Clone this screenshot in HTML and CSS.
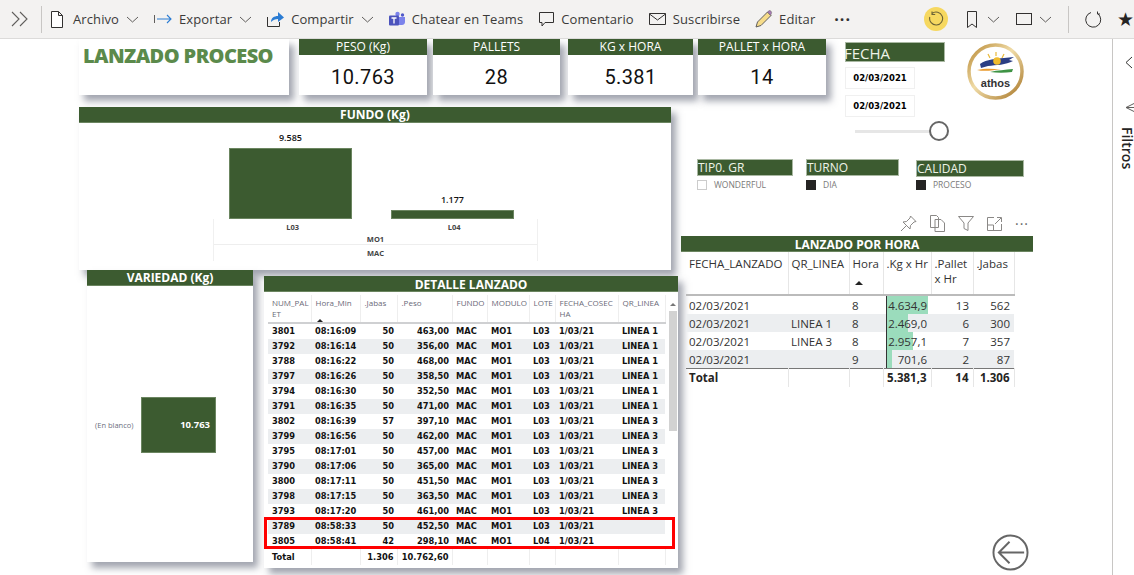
FILE: index.html
```html
<!DOCTYPE html>
<html lang="es">
<head>
  <meta charset="UTF-8">
  <title>Lanzado Proceso</title>
  <link rel="stylesheet" href="styles.css">
</head>
<body>
  <header class="toolbar">
    <svg class="expand" width="18" height="18" viewBox="0 0 18 18"><path d="M1 2l7 7-7 7M9 2l7 7-7 7" fill="none" stroke="#605e5c" stroke-width="1.1"/></svg>
    <span class="sep"></span>

    <div class="tool first">
      <svg width="12" height="17" viewBox="0 0 12 17"><path d="M.5.5h7l4 4v12H.5zM7.5.5v4h4" fill="#fff" stroke="#323130"/></svg>
      <span class="tool-text gap-file">Archivo</span>
      <svg class="chev" width="13" height="7" viewBox="0 0 13 7"><path d="M1 1l5.500 5L12 1" fill="none" stroke="#605e5c"/></svg>
    </div>
    <div class="tool">
      <svg width="18" height="10" viewBox="0 0 18 10"><path d="M.5 1v8" stroke="#605e5c" fill="none"/><path d="M3 5h14M13 1l4 4-4 4" stroke="#2b7cd3" fill="none" stroke-width="1.1"/></svg>
      <span class="tool-text">Exportar</span>
      <svg class="chev" width="13" height="7" viewBox="0 0 13 7"><path d="M1 1l5.500 5L12 1" fill="none" stroke="#605e5c"/></svg>
    </div>
    <div class="tool">
      <svg width="17" height="16" viewBox="0 0 17 16"><path d="M.5 6v9.500h12V11" fill="none" stroke="#323130"/><path d="M4 11c0-4 3-6 7-6V1l6 5.500L11 11V8c-3 0-5 1-7 3z" fill="#2b7cd3"/></svg>
      <span class="tool-text">Compartir</span>
      <svg class="chev" width="13" height="7" viewBox="0 0 13 7"><path d="M1 1l5.500 5L12 1" fill="none" stroke="#605e5c"/></svg>
    </div>
    <div class="tool">
      <svg width="16" height="16" viewBox="0 0 16 16"><circle cx="8.500" cy="3" r="2.200" fill="#7b83eb"/><circle cx="13.500" cy="4" r="1.700" fill="#5059c9"/><path d="M10 6h6v5c0 2-1.500 3-3 3h-3z" fill="#7b83eb"/><rect x="0" y="4.500" width="10" height="10" rx="1" fill="#4b53bc"/><path d="M2.500 7h5M5 7v5.500" stroke="#fff" stroke-width="1.300"/></svg>
      <span class="tool-text">Chatear en Teams</span>
    </div>
    <div class="tool gap-comment">
      <svg width="15" height="15" viewBox="0 0 15 15"><path d="M.5.5h14v10H6l-3 3.500v-3.500H.5z" fill="none" stroke="#323130"/></svg>
      <span class="tool-text">Comentario</span>
    </div>
    <div class="tool">
      <svg width="17" height="12" viewBox="0 0 17 12"><path d="M.5.5h16v11H.5zM.5 1l8 6 8-6" fill="none" stroke="#323130"/></svg>
      <span class="tool-text">Suscribirse</span>
    </div>
    <div class="tool">
      <svg width="18" height="18" viewBox="0 0 18 18"><path d="M1 17l1.500-5L12.500 2l3.500 3.500L6 15.500z" fill="#f6dc8a" stroke="#605e5c"/><path d="M12.500 2l1-1c.8-.6 1.800-.5 2.500.2s.8 1.800.3 2.500l-.8 1.800z" fill="#a77bb5" stroke="#605e5c" stroke-width=".5"/></svg>
      <span class="tool-text gap-edit">Editar</span>
    </div>
    <span class="more">···</span>

    <div class="tool-right">
      <span class="undo">
        <svg width="16" height="16" viewBox="0 0 16 16"><path d="M4 2.500A6.500 6.500 0 1 1 1.800 6M4 .5v3h3.200" fill="none" stroke="#6b6236" stroke-width="1.100"/></svg>
      </span>
      <svg class="mark" width="10" height="17" viewBox="0 0 10 17"><path d="M.5.5h9v16L5 13 .5 16.500z" fill="none" stroke="#323130"/></svg>
      <svg class="chev" width="13" height="7" viewBox="0 0 13 7"><path d="M1 1l5.500 5L12 1" fill="none" stroke="#605e5c"/></svg>
      <svg class="view" width="16" height="12" viewBox="0 0 16 12"><rect x=".5" y=".5" width="15" height="11" fill="none" stroke="#323130"/></svg>
      <svg class="chev" width="13" height="7" viewBox="0 0 13 7"><path d="M1 1l5.500 5L12 1" fill="none" stroke="#605e5c"/></svg>
      <span class="sep sep-right"></span>
      <svg class="reload" width="17" height="17" viewBox="0 0 17 17"><path d="M6 1.500A7.500 7.500 0 1 0 12.500 2.500M12.500 .5v2.500H15" fill="none" stroke="#323130"/></svg>
      <span class="star">★</span>
    </div>
  </header>

  <div class="page">
    <main class="report">
      <section class="top-row">
        <div class="card-title">LANZADO PROCESO</div>
        <div class="kpi kpi-peso"><h3>PESO (Kg)</h3><p>10.763</p></div>
        <div class="kpi kpi-pallets"><h3>PALLETS</h3><p>28</p></div>
        <div class="kpi kpi-kg"><h3>KG x HORA</h3><p>5.381</p></div>
        <div class="kpi kpi-hora"><h3>PALLET x HORA</h3><p>14</p></div>
      </section>

      <section class="side-top">
        <div class="fecha">
          <h3>FECHA</h3>
          <div class="date-box">02/03/2021</div>
          <div class="date-box">02/03/2021</div>
          <div class="slider"><span class="track"></span><span class="thumb"></span></div>
        </div>
        <svg class="logo" width="57" height="57" viewBox="0 0 57 57">
          <defs>
            <linearGradient id="ring" x1="0" y1="0" x2="1" y2="1">
              <stop offset="0" stop-color="#b98a35"/>
              <stop offset=".45" stop-color="#f0dca8"/>
              <stop offset="1" stop-color="#a9782a"/>
            </linearGradient>
          </defs>
          <circle cx="28.500" cy="28.500" r="26.500" fill="#fff" stroke="url(#ring)" stroke-width="3.500"/>
          <path d="M29 9v4M21 11l2 4M37 11l-2 4" stroke="#e9b93a" stroke-width="1.200"/>
          <path d="M13 21c7-5 16-5 24-6l10-1-5 3 4 1c-7 4-17 4-25 5l-7 2z" fill="#2b3e84"/>
          <circle cx="30" cy="18" r="3.800" fill="#f0bb2c"/>
          <path d="M10 27c8-2 16-1 24-1-7 1-16 3-24 1z" fill="#e99a2e"/>
          <path d="M23 29c8-2 15-2 23-3l-1 3c-7 1-15 1-22 0z" fill="#3e9344"/>
          <text x="28.500" y="44" text-anchor="middle" class="logo-text">athos</text>
        </svg>
      </section>

      <section class="left-col">
        <div class="visual fundo">
          <h2 class="band">FUNDO (Kg)</h2>
          <div class="plot">
            <div class="bar-col"><span>9.585</span><div class="bar bar-l03"></div></div>
            <div class="bar-col"><span>1.177</span><div class="bar bar-l04"></div></div>
          </div>
          <div class="axis">
            <div class="axis-row"><span>L03</span><span>L04</span></div>
            <div class="axis-line">MO1</div>
            <div class="axis-line last">MAC</div>
          </div>
        </div>

        <div class="bottom-row">
          <div class="visual variedad">
            <h2 class="band">VARIEDAD (Kg)</h2>
            <div class="var-chart">
              <span class="var-label">(En blanco)</span>
              <div class="var-bar">10.763</div>
            </div>
          </div>

          <div class="visual detalle">
            <h2 class="band">DETALLE LANZADO</h2>
            <div class="detalle-body">
              <table class="grid">
                <colgroup>
                  <col class="c1"><col class="c2"><col class="c3"><col class="c4"><col class="c5">
                  <col class="c6"><col class="c7"><col class="c8"><col class="c9">
                </colgroup>
                <thead>
                  <tr>
                    <th>NUM_PALET</th><th>Hora_Min<span class="sort"></span></th><th>.Jabas</th><th>.Peso</th><th>FUNDO</th>
                    <th>MODULO</th><th>LOTE</th><th>FECHA_COSECHA</th><th>QR_LINEA</th>
                  </tr>
                </thead>
                <tbody>
                  <tr><td>3801</td><td>08:16:09</td><td class="num">50</td><td class="num">463,00</td><td>MAC</td><td>MO1</td><td>L03</td><td>1/03/21</td><td>LINEA 1</td></tr>
                  <tr><td>3792</td><td>08:16:14</td><td class="num">50</td><td class="num">356,00</td><td>MAC</td><td>MO1</td><td>L03</td><td>1/03/21</td><td>LINEA 1</td></tr>
                  <tr><td>3788</td><td>08:16:22</td><td class="num">50</td><td class="num">468,00</td><td>MAC</td><td>MO1</td><td>L03</td><td>1/03/21</td><td>LINEA 1</td></tr>
                  <tr><td>3797</td><td>08:16:26</td><td class="num">50</td><td class="num">358,50</td><td>MAC</td><td>MO1</td><td>L03</td><td>1/03/21</td><td>LINEA 1</td></tr>
                  <tr><td>3794</td><td>08:16:30</td><td class="num">50</td><td class="num">352,50</td><td>MAC</td><td>MO1</td><td>L03</td><td>1/03/21</td><td>LINEA 1</td></tr>
                  <tr><td>3791</td><td>08:16:35</td><td class="num">50</td><td class="num">471,00</td><td>MAC</td><td>MO1</td><td>L03</td><td>1/03/21</td><td>LINEA 1</td></tr>
                  <tr><td>3802</td><td>08:16:39</td><td class="num">57</td><td class="num">397,10</td><td>MAC</td><td>MO1</td><td>L03</td><td>1/03/21</td><td>LINEA 3</td></tr>
                  <tr><td>3799</td><td>08:16:56</td><td class="num">50</td><td class="num">462,00</td><td>MAC</td><td>MO1</td><td>L03</td><td>1/03/21</td><td>LINEA 3</td></tr>
                  <tr><td>3795</td><td>08:17:01</td><td class="num">50</td><td class="num">457,00</td><td>MAC</td><td>MO1</td><td>L03</td><td>1/03/21</td><td>LINEA 3</td></tr>
                  <tr><td>3790</td><td>08:17:06</td><td class="num">50</td><td class="num">365,00</td><td>MAC</td><td>MO1</td><td>L03</td><td>1/03/21</td><td>LINEA 3</td></tr>
                  <tr><td>3800</td><td>08:17:11</td><td class="num">50</td><td class="num">451,50</td><td>MAC</td><td>MO1</td><td>L03</td><td>1/03/21</td><td>LINEA 3</td></tr>
                  <tr><td>3798</td><td>08:17:15</td><td class="num">50</td><td class="num">363,50</td><td>MAC</td><td>MO1</td><td>L03</td><td>1/03/21</td><td>LINEA 3</td></tr>
                  <tr><td>3793</td><td>08:17:20</td><td class="num">50</td><td class="num">461,00</td><td>MAC</td><td>MO1</td><td>L03</td><td>1/03/21</td><td>LINEA 3</td></tr>
                  <tr><td>3789</td><td>08:58:33</td><td class="num">50</td><td class="num">452,50</td><td>MAC</td><td>MO1</td><td>L03</td><td>1/03/21</td><td></td></tr>
                  <tr><td>3805</td><td>08:58:41</td><td class="num">42</td><td class="num">298,10</td><td>MAC</td><td>MO1</td><td>L04</td><td>1/03/21</td><td></td></tr>
                </tbody>
                <tfoot>
                  <tr><td>Total</td><td></td><td class="num">1.306</td><td class="num">10.762,60</td><td></td><td></td><td></td><td></td><td></td></tr>
                </tfoot>
              </table>
              <div class="scroll">
                <span class="caret"></span>
                <span class="scroll-thumb"></span>
              </div>
              <span class="red-box"></span>
            </div>
          </div>
        </div>
      </section>

      <section class="right-col">
        <div class="slicers">
          <div class="slicer tipo">
            <h4>TIP0. GR</h4>
            <div class="check"><span class="box"></span>WONDERFUL</div>
          </div>
          <div class="slicer turno">
            <h4>TURNO</h4>
            <div class="check"><span class="box on"></span>DIA</div>
          </div>
          <div class="slicer calidad">
            <h4>CALIDAD</h4>
            <div class="check"><span class="box on"></span>PROCESO</div>
          </div>
        </div>

        <div class="visual-tools">
          <svg width="17" height="17" viewBox="0 0 17 17"><path d="M10.500 1l5.500 5.500-2 .5-3.500 3.500-.5 3.500-7-7 3.500-.5L10 3zM6 11l-5 5" fill="none" stroke="#8a8886"/></svg>
          <svg width="15" height="17" viewBox="0 0 15 17"><path d="M.5.5h6l2 2v10h-8zM5 4.500h6l3.500 3.500v8.500H5z" fill="#fff" stroke="#8a8886"/></svg>
          <svg width="16" height="15" viewBox="0 0 16 15"><path d="M.5.5h15L10 7v7.500l-4-2V7z" fill="none" stroke="#8a8886"/></svg>
          <svg width="15" height="14" viewBox="0 0 15 14"><path d="M7 .5H.5v13h14V7M.5 8h6v5.500M8 7l6-6M10 .5h4.500V5" fill="none" stroke="#8a8886"/></svg>
          <span class="more more-small">···</span>
        </div>

        <div class="hora">
          <h2 class="band">LANZADO POR HORA</h2>
          <table class="hora-table">
            <colgroup>
              <col class="h1"><col class="h2"><col class="h3"><col class="h4"><col class="h5"><col class="h6">
            </colgroup>
            <thead>
              <tr>
                <th>FECHA_LANZADO</th><th>QR_LINEA</th><th>Hora<span class="sort"></span></th><th>.Kg x Hr</th><th>.Pallet x Hr</th><th>.Jabas</th>
              </tr>
            </thead>
            <tbody>
              <tr><td>02/03/2021</td><td></td><td>8</td><td class="num data-bar"><span class="fill fill-a"></span><span class="val">4.634,9</span></td><td class="num">13</td><td class="num">562</td></tr>
              <tr><td>02/03/2021</td><td>LINEA 1</td><td>8</td><td class="num data-bar"><span class="fill fill-b"></span><span class="val">2.469,0</span></td><td class="num">6</td><td class="num">300</td></tr>
              <tr><td>02/03/2021</td><td>LINEA 3</td><td>8</td><td class="num data-bar"><span class="fill fill-c"></span><span class="val">2.957,1</span></td><td class="num">7</td><td class="num">357</td></tr>
              <tr><td>02/03/2021</td><td></td><td>9</td><td class="num data-bar"><span class="fill fill-d"></span><span class="val">701,6</span></td><td class="num">2</td><td class="num">87</td></tr>
            </tbody>
            <tfoot>
              <tr><td>Total</td><td></td><td></td><td class="num">5.381,3</td><td class="num">14</td><td class="num">1.306</td></tr>
            </tfoot>
          </table>
        </div>

        <svg class="back" width="37" height="37" viewBox="0 0 38 38"><circle cx="19" cy="19" r="17.500" fill="none" stroke="#666" stroke-width="2"/><path d="M33 19H8M18 8L7 19l11 11" fill="none" stroke="#666" stroke-width="2"/></svg>
      </section>
    </main>

    <aside class="filters">
      <svg class="f-chev" width="8" height="13" viewBox="0 0 8 13"><path d="M7 1L1 6.500 7 12" fill="none" stroke="#323130"/></svg>
      <svg class="f-icon" width="9" height="11" viewBox="0 0 9 11"><path d="M10 1L1 5.500l9 4.500M10 5.500H1" fill="none" stroke="#605e5c"/></svg>
      <span class="f-text">Filtros</span>
    </aside>
  </div>
</body>
</html>
```

FILE: styles.css
```css
:root {
  --green: #3c5b30;
  --green-edge: #6b8560;
  --stripe: #eceef0;
  --shadow: 5px 6px 7px rgba(70, 75, 95, 0.5);
}

* {
  box-sizing: border-box;
}

html, body {
  height: 100%;
}

body {
  margin: 0;
  background: #fff;
  color: #252423;
  font-family: "Open Sans", "Liberation Sans", sans-serif;
  overflow: hidden;
}

h2, h3, h4, p {
  margin: 0;
}

/* top bar */
.toolbar {
  height: 39px;
  background: #f3f2f1;
  border-bottom: 1px solid #dcdbda;
  display: flex;
  align-items: center;
  padding-left: 11px;
  overflow: hidden;
}

.sep {
  width: 1px;
  height: 27px;
  background: #c8c6c4;
  margin: 0 9px 0 12px;
}

.tool {
  display: flex;
  align-items: center;
  gap: 7px;
  margin-left: 15px;
  flex: none;
}

.tool.first {
  margin-left: 0;
}

.tool.gap-comment {
  margin-left: 16px;
}

.tool-text {
  font-size: 13px;
  color: #3b3a39;
  letter-spacing: 0.1px;
}

.gap-file {
  margin-left: 3px;
}

.gap-edit {
  margin-left: -1px;
}

.chev {
  flex: none;
}

.more {
  margin-left: 19px;
  font-size: 16px;
  font-weight: 700;
  letter-spacing: 1px;
  color: #323130;
}

.tool-right {
  margin-left: auto;
  display: flex;
  align-items: center;
  flex: none;
}

.undo {
  width: 24px;
  height: 24px;
  border-radius: 50%;
  background: #f6d860;
  display: flex;
  align-items: center;
  justify-content: center;
}

.mark {
  margin-left: 19px;
}

.mark + .chev {
  margin-left: 10px;
}

.view {
  margin-left: 16px;
}

.view + .chev {
  margin-left: 7px;
}

.sep-right {
  margin: 0 16px;
}

.star {
  margin-left: 15px;
  font-size: 19px;
  line-height: 1;
  width: 17px;
  color: #252423;
  font-family: "DejaVu Sans", sans-serif;
}

/* report canvas */
.page {
  display: flex;
  height: 536px;
}

.report {
  width: 1112px;
  height: 536px;
  overflow: hidden;
  display: grid;
  grid-template-columns: 79px 602px 164px 267px;
  grid-template-rows: 68px 52px 416px;
}

.top-row {
  grid-column: 2 / 4;
  grid-row: 1;
  display: flex;
  align-items: flex-start;
}

.card-title {
  width: 210px;
  height: 56px;
  background: #fff;
  box-shadow: var(--shadow);
  color: #5b8a4b;
  font-size: 20px;
  font-weight: 800;
  letter-spacing: -0.6px;
  line-height: 34px;
  padding-left: 4px;
}

.kpi {
  height: 56px;
  background: #fff;
  box-shadow: var(--shadow);
  text-align: center;
}

.kpi h3 {
  height: 16px;
  background: var(--green);
  color: #fff;
  font-size: 12px;
  font-weight: 400;
  line-height: 16px;
}

.kpi p {
  font-family: Roboto, sans-serif;
  font-size: 20px;
  letter-spacing: 0.4px;
  line-height: 44px;
  color: #111;
}

.kpi-peso { width: 128px; margin-left: 10px; }
.kpi-pallets { width: 127px; margin-left: 6px; }
.kpi-kg { width: 125px; margin-left: 8px; }
.kpi-hora { width: 128px; margin-left: 5px; }

.side-top {
  grid-column: 4;
  grid-row: 1 / 3;
  display: flex;
  align-items: flex-start;
}

.fecha {
  width: 100px;
  flex: none;
  margin-top: 3px;
}

.fecha h3 {
  height: 20px;
  background: var(--green);
  border: 1px solid #a9b8a2;
  color: #eef3e8;
  font-size: 15px;
  font-weight: 400;
  line-height: 20px;
  text-indent: -2px;
}

.date-box {
  width: 70px;
  height: 22px;
  margin-top: 5px;
  border: 1px solid #f0f0f0;
  font-family: "DejaVu Sans", sans-serif;
  font-size: 8.500px;
  font-weight: 700;
  line-height: 21px;
  text-align: center;
  color: #000;
}

.date-box + .date-box {
  margin-top: 6px;
}

.slider {
  display: flex;
  align-items: center;
  width: 95px;
  margin: 4px 0 0 10px;
}

.track {
  width: 75px;
  height: 3px;
  flex: none;
  background: #e6e6e6;
}

.thumb {
  width: 20px;
  height: 20px;
  flex: none;
  margin-left: -1px;
  border: 2px solid #666;
  border-radius: 50%;
  background: #fff;
}

.logo {
  margin: 4px 0 0 22px;
  flex: none;
}

.logo-text {
  font-family: "Liberation Sans", sans-serif;
  font-size: 11px;
  font-weight: 700;
  fill: #333;
}

.left-col {
  grid-column: 2;
  grid-row: 2 / 4;
}

.visual {
  background: #fff;
  box-shadow: var(--shadow);
}

.band {
  height: 16px;
  background: var(--green);
  border-bottom: 1px solid var(--green-edge);
  color: #fff;
  font-size: 12px;
  font-weight: 700;
  line-height: 16px;
  text-align: center;
}

.detalle .band,
.hora .band {
  line-height: 17px;
}

.fundo {
  width: 592px;
  height: 163px;
}

.plot {
  display: flex;
  align-items: flex-end;
  gap: 39px;
  height: 96px;
  padding-left: 150px;
}

.bar-col {
  width: 123px;
  text-align: center;
  font-size: 9px;
  font-weight: 600;
  color: #111;
}

.bar-col span {
  display: block;
  line-height: 12px;
  margin-bottom: 4px;
}

.bar {
  background: var(--green);
  border: 1px solid var(--green-edge);
}

.bar-l03 { height: 71px; }
.bar-l04 { height: 9px; }

.axis {
  width: 325px;
  margin-left: 134px;
  border-left: 1px solid #f0f0f0;
  border-right: 1px solid #f0f0f0;
  font-size: 7.500px;
  font-weight: 700;
  text-align: center;
  color: #444;
}

.axis-row {
  display: flex;
  height: 14px;
  line-height: 16px;
}

.axis-row span {
  width: 50%;
  padding-right: 4px;
}

.axis-line {
  height: 12px;
  line-height: 12px;
  border-bottom: 1px solid #eee;
}

.axis-line.last {
  height: 16px;
  line-height: 16px;
  border-bottom: 0;
}

.bottom-row {
  display: flex;
  align-items: flex-start;
}

.variedad {
  width: 166px;
  height: 292px;
  margin-left: 8px;
}

.var-chart {
  display: flex;
  align-items: center;
  height: 278px;
  padding-left: 8px;
  padding-bottom: 1px;
}

.var-label {
  width: 46px;
  font-size: 7.500px;
  color: #6b6f80;
  white-space: nowrap;
}

.var-bar {
  width: 75px;
  height: 56px;
  background: var(--green);
  border: 1px solid var(--green-edge);
  color: #fff;
  font-size: 9.500px;
  font-weight: 700;
  line-height: 54px;
  text-align: right;
  padding-right: 5px;
}

.detalle {
  width: 414px;
  height: 292px;
  margin: 6px 0 0 11px;
}

.detalle-body {
  position: relative;
  display: flex;
  gap: 3px;
  padding: 3px 0 0 4px;
}

.grid {
  width: 397px;
  table-layout: fixed;
  border-collapse: collapse;
  font-family: "DejaVu Sans", sans-serif;
  font-size: 8.300px;
  font-weight: 700;
  color: #111;
}

.c1 { width: 43px; }
.c2 { width: 49px; }
.c3 { width: 37px; }
.c4 { width: 55px; }
.c5 { width: 35px; }
.c6 { width: 42px; }
.c7 { width: 26px; }
.c8 { width: 63px; }
.c9 { width: 47px; }

.grid th {
  height: 28px;
  padding: 2px 0 0 4px;
  vertical-align: top;
  text-align: left;
  font-family: "Open Sans", sans-serif;
  font-size: 8px;
  font-weight: 400;
  line-height: 11px;
  color: #6a6a78;
  word-break: break-all;
  border-right: 1px solid #eee;
  border-bottom: 2px solid #cfd0d2;
}

.grid td {
  height: 15px;
  padding: 0 0 0 4px;
  white-space: nowrap;
  line-height: 15px;
}

.grid td.num {
  text-align: right;
  padding: 0 3px 0 0;
}

.grid tbody tr:nth-child(even) td,
.hora-table tbody tr:nth-child(even) td {
  background: var(--stripe);
}

.grid tfoot td {
  border-right: 1px solid #eee;
  padding-top: 1px;
}

.sort {
  display: block;
  width: 0;
  height: 0;
  border-left: 3px solid transparent;
  border-right: 3px solid transparent;
  border-bottom: 3px solid #222;
}

.grid .sort {
  margin: 11px 0 0 1px;
}

.scroll {
  width: 8px;
  height: 262px;
}

.caret {
  display: block;
  width: 0;
  height: 0;
  margin: 8px auto 5px;
  border-left: 3px solid transparent;
  border-right: 3px solid transparent;
  border-bottom: 3px solid #777;
}

.scroll-thumb {
  display: block;
  height: 120px;
  background: #d2d2d2;
}

.red-box {
  position: absolute;
  left: 0;
  top: 225px;
  width: 411px;
  height: 32px;
  border: 3px solid #f00;
}

/* right side */
.right-col {
  grid-column: 3 / 5;
  grid-row: 3;
  display: flex;
  flex-direction: column;
  padding-top: 39px;
  margin-top: -39px;
}

.slicers {
  display: flex;
  align-items: flex-start;
  padding-left: 16px;
  height: 42px;
}

.slicer h4 {
  background: var(--green);
  border: 1px solid #a9b8a2;
  color: #eef3e8;
  font-size: 12px;
  font-weight: 400;
  line-height: 15px;
}

.tipo { width: 96px; }
.turno { width: 93px; margin-left: 13px; }
.calidad { width: 108px; margin-left: 17px; margin-top: 1px; }

.check {
  display: flex;
  align-items: center;
  gap: 7px;
  margin-top: 3px;
  font-size: 8.500px;
  color: #7a7a7a;
}

.calidad .check {
  margin-top: 2px;
}

.box {
  width: 10px;
  height: 10px;
  border: 1px solid #ccc;
  background: #fff;
}

.box.on {
  background: #252423;
  border-color: #252423;
}

.visual-tools {
  height: 35px;
  display: flex;
  align-items: center;
  gap: 13px;
  padding: 10px 0 0 219px;
}

.more-small {
  margin-left: 0;
  font-size: 14px;
  font-weight: 400;
  color: #666;
}

.hora {
  width: 352px;
}

.hora-table {
  width: 328px;
  margin-left: 5px;
  table-layout: fixed;
  border-collapse: collapse;
  font-size: 11.500px;
  color: #333;
}

.h1 { width: 102px; }
.h2 { width: 61px; }
.h3 { width: 34px; }
.h4 { width: 48px; }
.h5 { width: 42px; }
.h6 { width: 41px; }

.hora-table th {
  height: 43px;
  padding: 4px 0 0 3px;
  vertical-align: top;
  text-align: left;
  font-weight: 400;
  line-height: 15px;
  border-right: 1px solid #e6e6e6;
  border-bottom: 2px solid #bbb;
}

.hora-table .sort {
  margin: 10px 0 0 2px;
  border-left-width: 4px;
  border-right-width: 4px;
  border-bottom-width: 4px;
}

.hora-table td {
  height: 18px;
  padding: 1px 0 0 3px;
  line-height: 17px;
  white-space: nowrap;
}

.hora-table td.num {
  text-align: right;
  padding: 1px 4px 0 0;
}

.hora-table tfoot td,
.hora-table tfoot td.num {
  padding-top: 0;
  border-top: 1px solid #777;
  border-right: 1px solid #e6e6e6;
  font-weight: 700;
  color: #252423;
}

.data-bar {
  position: relative;
}

.fill {
  position: absolute;
  left: 3px;
  top: 0;
  bottom: 0;
  background: #9bdcbc;
  border-left: 1px solid #333;
}

.val {
  position: relative;
}

.fill-a { width: 42px; }
.fill-b { width: 22px; }
.fill-c { width: 27px; }
.fill-d { width: 6px; }

.back {
  margin: 147px 0 0 311px;
  flex: none;
}

/* filter pane */
.filters {
  width: 22px;
  border-left: 1px solid #c8c6c4;
  display: flex;
  flex-direction: column;
  align-items: flex-start;
  padding: 17px 0 0 12px;
}

.f-icon {
  margin-top: 33px;
  flex: none;
}

.f-text {
  writing-mode: vertical-rl;
  margin: 14px 0 0 -3px;
  font-size: 14px;
  font-weight: 600;
  color: #252423;
  line-height: 11px;
}
```
